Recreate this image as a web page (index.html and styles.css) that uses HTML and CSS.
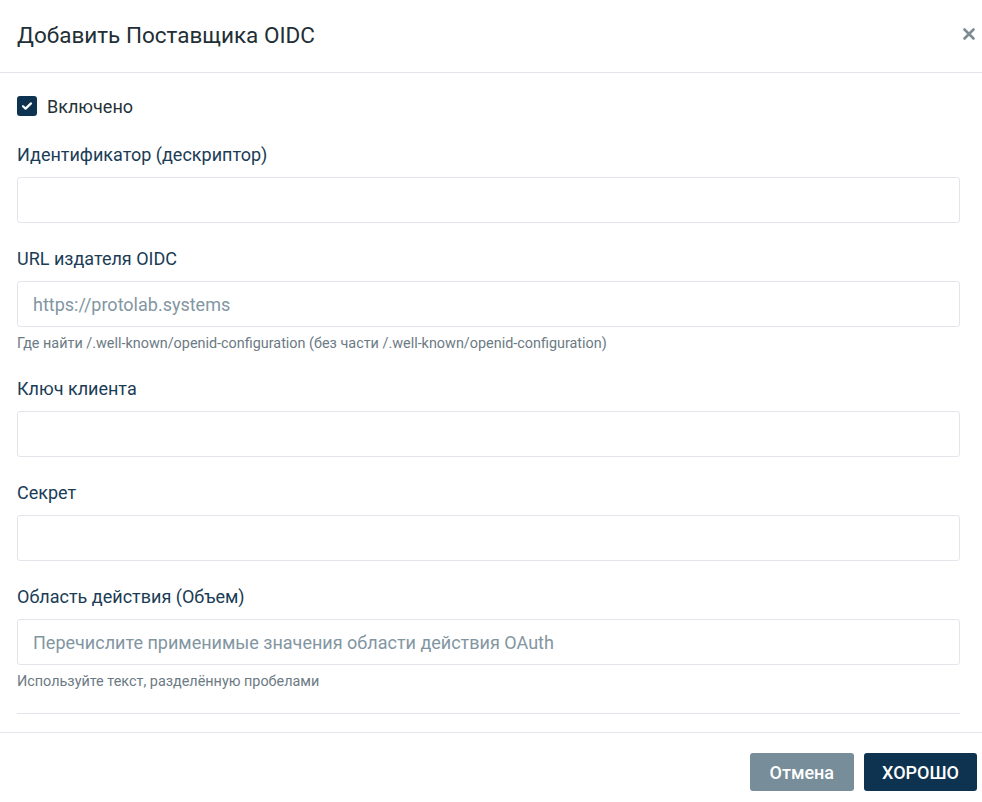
FILE: index.html
```html
<!DOCTYPE html>
<html lang="ru">
<head>
<meta charset="UTF-8">
<meta name="viewport" content="width=device-width, initial-scale=1.0">
<title>Добавить Поставщика OIDC</title>
<link rel="stylesheet" href="styles.css">
</head>
<body>
  <div class="dialog">
    <div class="dialog-header">
      <h2 class="dialog-title">Добавить Поставщика OIDC</h2>
      <button type="button" class="close-btn" aria-label="Закрыть">
        <svg width="12" height="12" viewBox="0 0 12 12">
          <path d="M1.5 1.5 L10.5 10.5 M10.5 1.5 L1.5 10.5" stroke="#7d8b93" stroke-width="2.6" stroke-linecap="round"/>
        </svg>
      </button>
    </div>

    <form class="dialog-body">
      <label class="check-row">
        <span class="checkbox">
          <svg width="12" height="10" viewBox="0 0 12 10">
            <path d="M2 5.2 L4.6 7.6 L10 2.4" fill="none" stroke="#fff" stroke-width="2.2" stroke-linecap="round" stroke-linejoin="round"/>
          </svg>
        </span>
        Включено
      </label>

      <div class="field">
        <label for="handle">Идентификатор (дескриптор)</label>
        <input type="text" id="handle">
      </div>

      <div class="field">
        <label for="issuer">URL издателя OIDC</label>
        <input type="text" id="issuer" placeholder="https://protolab.systems">
        <div class="help">Где найти /.well-known/openid-configuration (без части /.well-known/openid-configuration)</div>
      </div>

      <div class="field">
        <label for="client">Ключ клиента</label>
        <input type="text" id="client">
      </div>

      <div class="field">
        <label for="secret">Секрет</label>
        <input type="text" id="secret">
      </div>

      <div class="field last">
        <label for="scope">Область действия (Объем)</label>
        <input type="text" id="scope" placeholder="Перечислите применимые значения области действия OAuth">
        <div class="help">Используйте текст, разделённую пробелами</div>
      </div>

      <hr class="divider">
    </form>

    <div class="dialog-footer">
      <button type="button" class="btn btn-cancel">Отмена</button>
      <button type="button" class="btn btn-ok">ХОРОШО</button>
    </div>
  </div>
</body>
</html>
```

FILE: styles.css
```css
body {
  font-family: Roboto, "Noto Sans", Arial, sans-serif;
  font-size: 18px;
  background: #fff;
  margin: 0;
  padding: 0;
  color: #1a3c56;
}
.dialog {
  background-color: white;
}
.dialog-header {
  height: 72px;
  border-bottom: 1px solid #e3e5ea;
  display: flex;
  align-items: center;
  justify-content: space-between;
  padding: 0 6px 0 17px;
}
.dialog-title {
  margin: 0;
  font-size: 22.5px;
  font-weight: 400;
  color: #222f36;
  padding-bottom: 2px;
}
.close-btn {
  background: none;
  border: none;
  padding: 0;
  width: 14px;
  height: 14px;
  display: flex;
  align-items: center;
  justify-content: center;
  cursor: pointer;
  margin-bottom: 4px;
}
.dialog-body {
  padding: 21px 22px 18px 17px;
}
.check-row {
  display: flex;
  align-items: center;
  gap: 10px;
  height: 24px;
  font-size: 18px;
  color: #263238;
  margin-bottom: 25px;
}
.checkbox {
  width: 20px;
  height: 20px;
  border-radius: 3px;
  background-color: #0e3350;
  display: flex;
  align-items: center;
  justify-content: center;
}
.field {
  margin-bottom: 24px;
}
.field.last {
  margin-bottom: 22px;
}
.field label {
  display: block;
  font-size: 18px;
  line-height: 23px;
  padding-bottom: 1px;
  color: #1a3c56;
  margin-bottom: 10px;
}
.field input {
  display: block;
  width: 100%;
  height: 46px;
  padding: 0 15px;
  border: 1px solid #e3e5ea;
  border-radius: 3px;
  box-sizing: border-box;
  font-family: inherit;
  font-size: 18px;
  color: #222f36;
  outline: none;
}
.field input::placeholder {
  color: #8296a2;
}
.help {
  font-size: 14.4px;
  line-height: 20px;
  color: #6c7a84;
  margin-top: 7px;
  margin-bottom: -1px;
}
.divider {
  border: none;
  border-top: 1px solid #e3e5ea;
  margin: 0;
}
.dialog-footer {
  border-top: 1px solid #e3e5ea;
  display: flex;
  justify-content: flex-end;
  gap: 10px;
  padding: 20px 5px 11px 0;
}
.btn {
  height: 38px;
  padding: 0 18px;
  border: none;
  border-radius: 3px;
  font-family: inherit;
  font-size: 18px;
  font-weight: 500;
  color: white;
  cursor: pointer;
}
.btn-cancel {
  background-color: #778d9a;
  padding: 0 20px;
}
.btn-ok {
  background-color: #0e3350;
}
```
